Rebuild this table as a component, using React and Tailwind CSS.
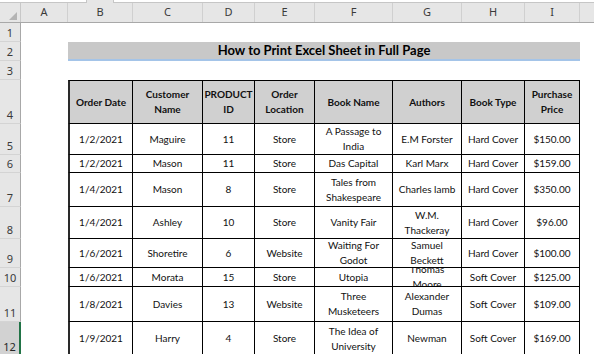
const colW = ['w-[47px]', 'w-[65px]', 'w-[70px]', 'w-[52px]', 'w-[60px]', 'w-[78px]', 'w-[69px]', 'w-[63px]', 'w-[55px]']
const letters = ['A', 'B', 'C', 'D', 'E', 'F', 'G', 'H', 'I']

const header = [['Order Date'], ['Customer', 'Name'], ['PRODUCT', 'ID'], ['Order', 'Location'], ['Book Name'], ['Authors'], ['Book Type'], ['Purchase', 'Price']]

const rows = [
  { n: 5, h: 'h-[31px]', cells: [['1/2/2021'], ['Maguire'], ['11'], ['Store'], ['A Passage to', 'India'], ['E.M Forster'], ['Hard Cover'], ['$150.00']] },
  { n: 6, h: 'h-[18px]', cells: [['1/2/2021'], ['Mason'], ['11'], ['Store'], ['Das Capital'], ['Karl Marx'], ['Hard Cover'], ['$159.00']] },
  { n: 7, h: 'h-[34px]', cells: [['1/4/2021'], ['Mason'], ['8'], ['Store'], ['Tales from', 'Shakespeare'], ['Charles lamb'], ['Hard Cover'], ['$350.00']] },
  { n: 8, h: 'h-[32px]', cells: [['1/4/2021'], ['Ashley'], ['10'], ['Store'], ['Vanity Fair'], ['W.M.', 'Thackeray'], ['Hard Cover'], ['$96.00']] },
  { n: 9, h: 'h-[29px]', cells: [['1/6/2021'], ['Shoretire'], ['6'], ['Website'], ['Waiting For', 'Godot'], ['Samuel', 'Beckett'], ['Hard Cover'], ['$100.00']] },
  { n: 10, h: 'h-[19px]', cells: [['1/6/2021'], ['Morata'], ['15'], ['Store'], ['Utopia'], ['Thomas', 'Moore'], ['Soft Cover'], ['$125.00']] },
  { n: 11, h: 'h-[35px]', cells: [['1/8/2021'], ['Davies'], ['13'], ['Website'], ['Three', 'Musketeers'], ['Alexander', 'Dumas'], ['Soft Cover'], ['$109.00']] },
  { n: 12, h: 'h-[34px]', sel: true, cells: [['1/9/2021'], ['Harry'], ['4'], ['Store'], ['The Idea of', 'University'], ['Newman'], ['Soft Cover'], ['$169.00']] },
]

function RowHead({ n, sel }) {
  return (
    <div className={`w-[21px] shrink-0 flex items-end justify-center pb-[1px] border-b border-b-[#d4d4d4] font-['Noto_Sans',sans-serif] text-[11px] leading-[14px] ${sel ? 'bg-[#d2d2d2] text-[#262626] border-r-2 border-r-[#217346]' : 'bg-[#e6e6e6] text-[#3a3a3a] border-r border-r-[#a8a8a8]'}`}>
      {n}
    </div>
  )
}

function Cell({ i, lines, top }) {
  return (
    <div className={`${colW[i + 1]} shrink-0 flex flex-col items-center justify-center overflow-hidden text-center leading-[15px] border-r border-b border-black ${i === 0 ? 'border-l-2 border-l-[#2a2a2a]' : ''} ${top ? 'border-t border-t-black bg-[#d0d0d0] font-bold' : ''}`}>
      {lines.map((l, k) => (
        <span key={k} className="whitespace-nowrap shrink-0">{l}</span>
      ))}
    </div>
  )
}

function SheetRow({ n, h, sel, children }) {
  return (
    <div className={`flex ${h}`}>
      <RowHead n={n} sel={sel} />
      <div className="w-[47px] shrink-0" />
      {children}
    </div>
  )
}

export default function App() {
  return (
    <div className="w-[594px] h-[354px] overflow-hidden bg-white text-[#111] font-['Lato',sans-serif] text-[10px]">
      <div className="flex h-[3px] bg-[#e6e6e6]">
        <div className="w-[87px] bg-white border-r border-b border-[#c6c6c6]" />
        <div className="w-[26px]" />
        <div className="flex-1 bg-white border-l border-b border-[#c6c6c6]" />
      </div>
      <div className="flex h-[20px] bg-[#e6e6e6] border-b border-[#a8a8a8] font-['Noto_Sans',sans-serif] text-[11px] text-[#3a3a3a]">
        <div className="w-[21px] shrink-0 border-r border-[#c8c8c8] flex items-end justify-end pr-[3px] pb-[2px]">
          <svg width="8" height="8" viewBox="0 0 8 8"><polygon points="8,0 8,8 0,8" fill="#b4b4b4" /></svg>
        </div>
        {letters.map((l, i) => (
          <div key={l} className={`${colW[i]} shrink-0 flex items-center justify-center border-r border-[#d0d0d0]`}>{l}</div>
        ))}
        <div className="flex-1" />
      </div>

      <SheetRow n={1} h="h-[19px]" />
      <SheetRow n={2} h="h-[19px]">
        <div className="w-[512px] shrink-0 bg-[#c8c8c8] border-b-2 border-[#a4c4e8] flex items-center justify-center font-bold text-[13px] leading-[15px] text-black">
          How to Print Excel Sheet in Full Page
        </div>
      </SheetRow>
      <SheetRow n={3} h="h-[19px]" />
      <SheetRow n={4} h="h-[44px]">
        {header.map((c, i) => <Cell key={i} i={i} lines={c} top />)}
      </SheetRow>
      {rows.map(r => (
        <SheetRow key={r.n} n={r.n} h={r.h} sel={r.sel}>
          {r.cells.map((c, i) => <Cell key={i} i={i} lines={c} />)}
        </SheetRow>
      ))}
    </div>
  )
}
